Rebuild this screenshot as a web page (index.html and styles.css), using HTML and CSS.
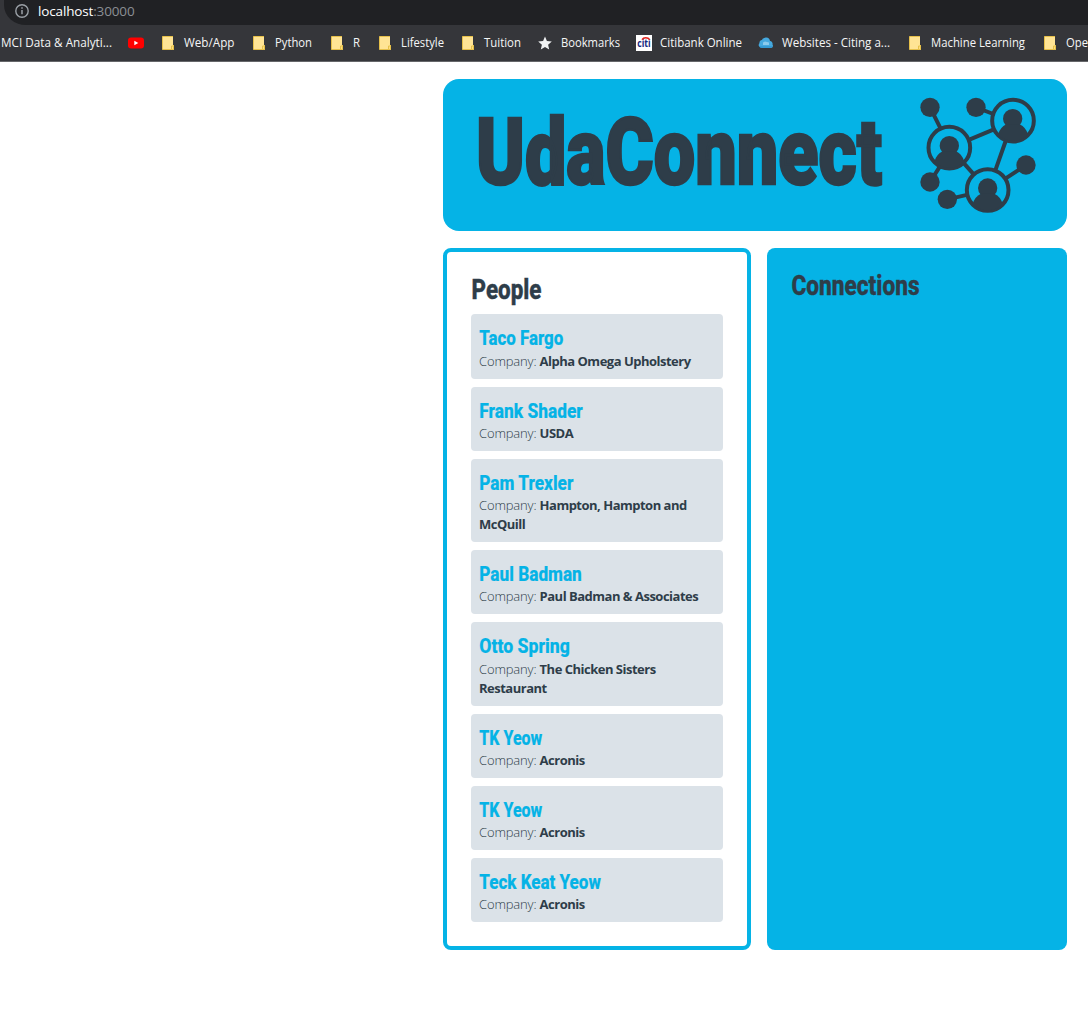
FILE: index.html
```html
<!DOCTYPE html>
<html lang="en">
<head>
<meta charset="utf-8">
<title>UdaConnect</title>
<link rel="stylesheet" href="styles.css">
</head>
<body>
<svg class="defs" width="0" height="0" aria-hidden="true">
  <symbol id="folder" viewBox="0 0 16 16"><path d="M2.5 1.5h11v13h-11z" fill="#ffe494" stroke="#e6c04a"/><path d="M13 1h1v9h-1z" fill="#35363a"/><path d="M11.5 14.5v-3.500h2v3.500z" fill="#ffe07c" stroke="#e6c04a"/></symbol>
</svg>
<div class="browser">
  <div class="address">
    <svg class="info" viewBox="0 0 14 14"><circle cx="7" cy="7" r="6.2" fill="none" stroke="#9aa0a6" stroke-width="1.4"/><path d="M7 6v4.300M7 3.300v1.500" stroke="#9aa0a6" stroke-width="1.500"/></svg>
    <span class="url"><span class="host">localhost</span><span class="port">:30000</span></span>
  </div>
  <nav class="bookmarks">
    <a class="mark"><svg class="label" width="112" height="20"><text x="1" y="14" textLength="111" lengthAdjust="spacingAndGlyphs">MCI Data &amp; Analyti...</text></svg></a>
    <a class="mark"><svg class="icon" viewBox="0 0 16 16"><rect y="2.500" width="16" height="11" rx="3" fill="#f00"/><path d="M6.300 5.700v4.600l4-2.300z" fill="#fff"/></svg></a>
    <a class="mark"><svg class="icon"><use href="#folder"/></svg><svg class="label" width="51" height="20"><text y="14" textLength="50.500" lengthAdjust="spacingAndGlyphs">Web/App</text></svg></a>
    <a class="mark"><svg class="icon"><use href="#folder"/></svg><svg class="label" width="38" height="20"><text y="14" textLength="37" lengthAdjust="spacingAndGlyphs">Python</text></svg></a>
    <a class="mark"><svg class="icon"><use href="#folder"/></svg><svg class="label" width="8" height="20"><text y="14" textLength="7" lengthAdjust="spacingAndGlyphs">R</text></svg></a>
    <a class="mark"><svg class="icon"><use href="#folder"/></svg><svg class="label" width="44" height="20"><text y="14" textLength="43" lengthAdjust="spacingAndGlyphs">Lifestyle</text></svg></a>
    <a class="mark"><svg class="icon"><use href="#folder"/></svg><svg class="label" width="38" height="20"><text y="14" textLength="37" lengthAdjust="spacingAndGlyphs">Tuition</text></svg></a>
    <a class="mark"><svg class="icon" viewBox="0 0 16 16"><path d="M8 1.500l1.900 4.600 4.900.4-3.700 3.200 1.100 4.800L8 11.900l-4.200 2.600 1.100-4.800L1.200 6.500l4.900-.4z" fill="#f1f3f4"/></svg><svg class="label" width="60" height="20"><text y="14" textLength="59" lengthAdjust="spacingAndGlyphs">Bookmarks</text></svg></a>
    <a class="mark"><svg class="icon" viewBox="0 0 16 16"><path d="M0 0h16v16H0z" fill="#fff"/><text class="citi" x="1.200" y="11.800" textLength="13.500" lengthAdjust="spacingAndGlyphs">citi</text><path d="M6 4.700C7.500 2 12 2 13.700 4.700" fill="none" stroke="#e3221c" stroke-width="1.400"/></svg><svg class="label" width="83" height="20"><text y="14" textLength="82" lengthAdjust="spacingAndGlyphs">Citibank Online</text></svg></a>
    <a class="mark"><svg class="icon" viewBox="0 0 16 16"><path d="M4 13a3 3 0 0 1-2.500-5A2.500 2.500 0 0 1 4 5a4.200 4.200 0 0 1 8 1A2.800 2.800 0 0 1 14.500 9.500 2.200 2.200 0 0 1 13 13z" fill="#45a9df"/><path d="M5 7.500l2-1 4 1v2.500H5z" fill="#8bcbed"/><path d="M2 12h12" stroke="#278cc8"/></svg><svg class="label" width="109" height="20"><text y="14" textLength="108" lengthAdjust="spacingAndGlyphs">Websites - Citing a...</text></svg></a>
    <a class="mark"><svg class="icon"><use href="#folder"/></svg><svg class="label" width="95" height="20"><text y="14" textLength="94" lengthAdjust="spacingAndGlyphs">Machine Learning</text></svg></a>
    <a class="mark"><svg class="icon"><use href="#folder"/></svg><svg class="label" width="23" height="20"><text y="14" textLength="22" lengthAdjust="spacingAndGlyphs">Ope</text></svg></a>
  </nav>
</div>
<main class="app">
  <header class="banner">
    <svg class="wordmark" width="412" height="112"><text x="1" y="85" textLength="406" lengthAdjust="spacingAndGlyphs">UdaConnect</text></svg>
    <svg class="network" viewBox="60 50 348 348">
      <g fill="none" stroke="#2e3d49" stroke-width="12">
        <path d="M90 81l32 64M228 81l52 20M210 177l70-29M317 182l-31 88M120 258l-30 47M190 247l32 36M378 254l-62 41M142 357l62-14"/>
        <circle cx="148" cy="202" r="62.500"/><circle cx="339" cy="121" r="62.500"/><circle cx="263" cy="329" r="62.500"/>
      </g>
      <g fill="#2e3d49">
        <circle cx="90" cy="81" r="29"/><circle cx="228" cy="81" r="29"/><circle cx="90" cy="305" r="29"/><circle cx="142" cy="357" r="29"/><circle cx="378" cy="254" r="29"/>
        <circle cx="148" cy="196" r="29"/><path d="M103 244q6-22 25-31h40q19 9 25 31a63 63 0 0 1-90 0z"/>
        <circle cx="338" cy="115" r="29"/><path d="M294 163q6-22 25-31h40q19 9 25 31a63 63 0 0 1-90 0z"/>
        <circle cx="263" cy="323" r="29"/><path d="M218 371q6-22 25-31h40q19 9 25 31a63 63 0 0 1-90 0z"/>
      </g>
    </svg>
  </header>
  <div class="columns">
    <section class="panel people">
      <svg class="title" width="100"><text x=".5" y="23" textLength="70" lengthAdjust="spacingAndGlyphs">People</text></svg>
      <div class="list">
        <article class="card"><svg class="name" width="200"><text x=".3" y="22.500" textLength="84" lengthAdjust="spacingAndGlyphs">Taco Fargo</text></svg><p class="company">Company: <b>Alpha Omega Upholstery</b></p></article>
        <article class="card"><svg class="name" width="200"><text x=".3" y="22.500" textLength="103.500" lengthAdjust="spacingAndGlyphs">Frank Shader</text></svg><p class="company">Company: <b>USDA</b></p></article>
        <article class="card"><svg class="name" width="200"><text x=".3" y="22.500" textLength="94" lengthAdjust="spacingAndGlyphs">Pam Trexler</text></svg><p class="company">Company: <b>Hampton, Hampton and McQuill</b></p></article>
        <article class="card"><svg class="name" width="200"><text x=".3" y="22.500" textLength="102.500" lengthAdjust="spacingAndGlyphs">Paul Badman</text></svg><p class="company">Company: <b>Paul Badman &amp; Associates</b></p></article>
        <article class="card"><svg class="name" width="200"><text x=".3" y="22.500" textLength="90.500" lengthAdjust="spacingAndGlyphs">Otto Spring</text></svg><p class="company">Company: <b>The Chicken Sisters Restaurant</b></p></article>
        <article class="card"><svg class="name" width="200"><text x=".3" y="22.500" textLength="63" lengthAdjust="spacingAndGlyphs">TK Yeow</text></svg><p class="company">Company: <b>Acronis</b></p></article>
        <article class="card"><svg class="name" width="200"><text x=".3" y="22.500" textLength="63" lengthAdjust="spacingAndGlyphs">TK Yeow</text></svg><p class="company">Company: <b>Acronis</b></p></article>
        <article class="card"><svg class="name" width="200"><text x=".3" y="22.500" textLength="121.500" lengthAdjust="spacingAndGlyphs">Teck Keat Yeow</text></svg><p class="company">Company: <b>Acronis</b></p></article>
      </div>
    </section>
    <section class="panel connections">
      <svg class="title" width="140"><text x=".5" y="23" textLength="128" lengthAdjust="spacingAndGlyphs">Connections</text></svg>
    </section>
  </div>
</main>
</body>
</html>
```
FILE: styles.css
```css
* { box-sizing: border-box; }
html, body { height: 100%; }
body {
  margin: 0;
  overflow: hidden;
  background: #fff;
  color: #2e3d49;
  font-family: "Open Sans", "Noto Sans", sans-serif;
}
svg { display: block; flex: none; }
.defs { height: 0; }

.browser {
  height: 62px;
  background: #35363a;
  border-bottom: 1px solid #66676a;
  overflow: hidden;
}
.address {
  display: flex;
  align-items: center;
  gap: 9px;
  height: 25px;
  margin-left: 4px;
  padding: 0 0 3px 11px;
  background: #202124;
  border-bottom-left-radius: 22px 20px;
}
.info { width: 14px; height: 14px; }
.url { font-size: 13.500px; letter-spacing: -.15px; line-height: 20px; color: #8b8f94; }
.host { color: #fff; }
.bookmarks {
  display: grid;
  grid-template-columns: 128px 32px 91px 78px 48px 83px 77px 99px 122px 149px 135px 46px;
  height: 36px;
  align-items: center;
}
.mark { display: flex; align-items: center; gap: 8px; }
.icon { width: 16px; height: 16px; }
.label { font-size: 12px; font-weight: 500; fill: #f5f6f7; overflow: visible; }
.citi { font: bold 10px "Open Sans", sans-serif; fill: #172a80; }

.app { width: 624px; margin: 17px 0 0 443px; }
.banner {
  display: flex;
  align-items: center;
  justify-content: space-between;
  height: 152px;
  padding: 0 31px 0 32px;
  border-radius: 16px;
  background: #05b3e6;
}
.wordmark, .title, .name { font-family: Roboto, "Liberation Sans Narrow", sans-serif; overflow: visible; }
.wordmark { font-size: 93px; font-weight: 900; fill: #2e3d49; stroke: #2e3d49; stroke-width: 2.500px; }
.network { width: 116px; height: 116px; }
.columns { display: flex; gap: 16px; margin-top: 17px; }
.panel { height: 702px; border-radius: 8px; padding: 24px; }
.people { width: 308px; border: 4px solid #05b3e6; }
.connections { width: 300px; background: #05b3e6; }
.title { height: 38.400px; font-size: 28.500px; font-weight: 800; fill: #2e3d49; stroke: #2e3d49; stroke-width: .4px; }
.list { display: grid; gap: 8px; }
.card { padding: 8px; border-radius: 4px; background: #dbe2e8; }
.name { height: 29.200px; font-size: 20px; font-weight: 800; fill: #05b3e6; stroke: #05b3e6; stroke-width: .2px; }
.company { margin: 0; font-size: 13px; line-height: 19.500px; font-weight: 350; letter-spacing: -.15px; }
.company b { font-weight: 700; letter-spacing: -.5px; }
.card { padding-bottom: 7.450px; }
```
